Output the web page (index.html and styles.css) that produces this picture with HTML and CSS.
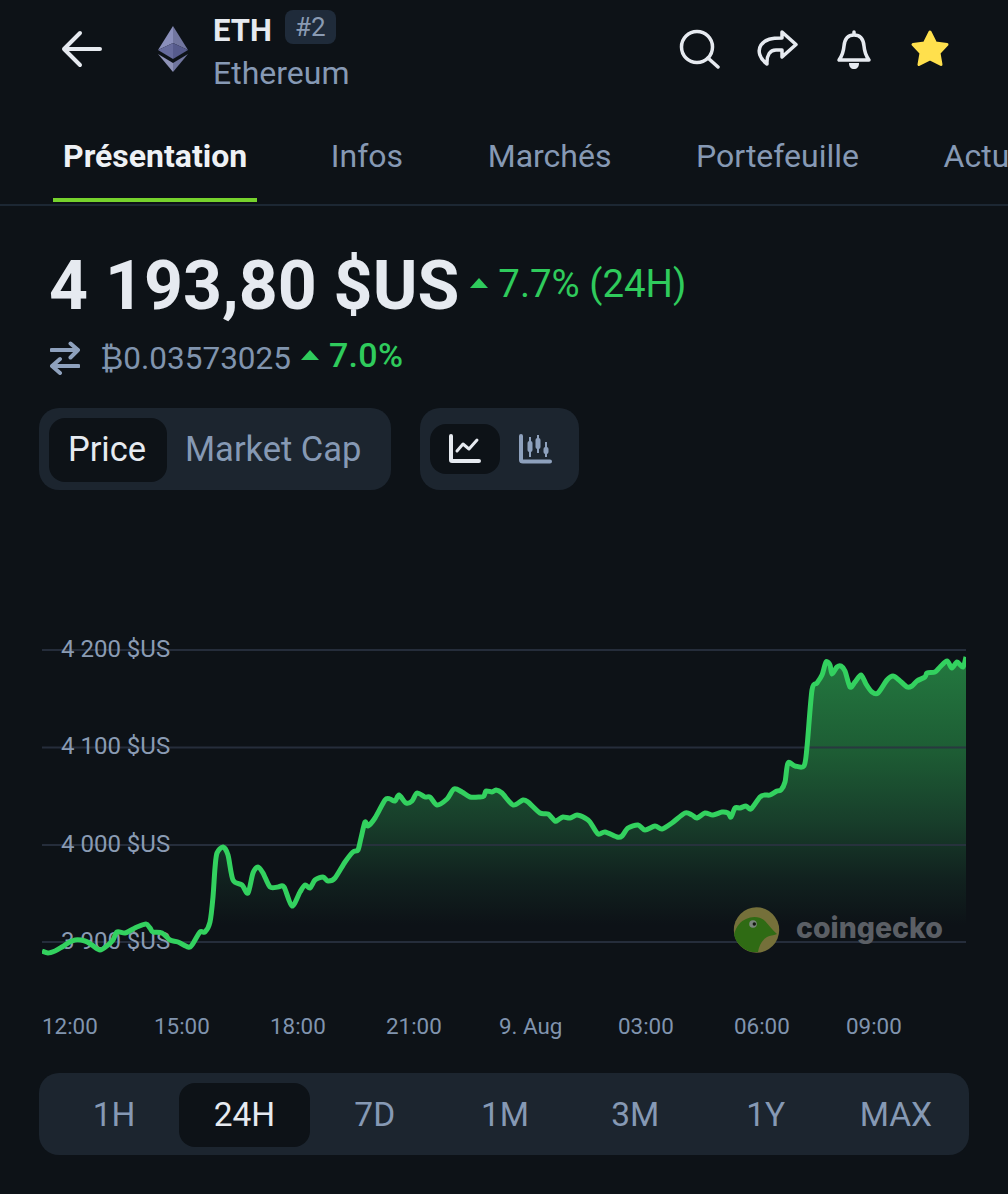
FILE: index.html
```html
<!DOCTYPE html>
<html lang="fr">
<head>
<meta charset="utf-8">
<title>Ethereum</title>
<link rel="stylesheet" href="styles.css">
</head>
<body>
<div class="page">
  <header class="topbar">
    <svg class="back" viewBox="0 0 42 38"><path d="M39 19H3M19 3 3 19l16 16"/></svg>
    <svg class="ethlogo" viewBox="158 26 30 46">
      <polygon points="173,26 158,50 173,43" fill="#8a8fbb"/>
      <polygon points="173,26 188,50 173,43" fill="#71769f"/>
      <polygon points="158,50 173,43 173,59" fill="#666b9c"/>
      <polygon points="188,50 173,43 173,59" fill="#565b8c"/>
      <polygon points="158,54 173,63 173,72" fill="#8f93b8"/>
      <polygon points="188,54 173,63 173,72" fill="#71769f"/>
    </svg>
    <div class="coin">
      <div class="coin-top"><span class="symbol">ETH</span><span class="rank">#2</span></div>
      <div class="coin-name">Ethereum</div>
    </div>
    <div class="actions">
      <svg class="ic ic-search" viewBox="678 28 42 42"><circle cx="697" cy="47" r="15.500"/><path d="M708 58 718 67"/></svg>
      <svg class="ic ic-share" viewBox="0 0 44 44"><path d="M26 5 40 17.500 26 30V23H20C14 23 10.500 28 11 37 4 32 1 24 5 18 9 12 16 11 26 11Z"/></svg>
      <svg class="ic ic-bell" viewBox="834 26 40 44"><path d="M854 34C847 34 844.500 39 844 45 843.500 51 842 55 839 59H869C866 55 864.500 51 864 45 863.500 39 861 34 854 34ZM854 31V34"/><path class="fill" d="M849 62H859C859 66 857 68 854 68 851 68 849 66 849 62Z"/></svg>
      <svg class="ic-star" viewBox="910 30 40 40"><polygon points="930,33 935.500,44 947,45.500 939,54 941,65.500 930,60 919,65.500 921,54 913,45.500 924.500,44"/></svg>
    </div>
  </header>

  <nav class="tabs">
    <a class="tab tab-active">Présentation</a>
    <a class="tab">Infos</a>
    <a class="tab">Marchés</a>
    <a class="tab">Portefeuille</a>
    <a class="tab">Actualités</a>
  </nav>

  <section class="quote">
    <div class="price-row">
      <span class="price">4 193,80 $US</span>
      <span class="tri"></span>
      <span class="change">7.7% (24H)</span>
    </div>
    <div class="btc-row">
      <svg class="swap" viewBox="0 0 30 34"><path d="M1.500 9H28M20.500 2.500 28 9 20.500 16.500M28.500 25H2M10 18 2 25 10 32"/></svg>
      <span class="btc">₿0.03573025</span>
      <span class="tri tri-small"></span>
      <span class="change change-small">7.0%</span>
    </div>
  </section>

  <div class="controls">
    <div class="seg">
      <span class="seg-item seg-active">Price</span>
      <span class="seg-item">Market Cap</span>
    </div>
    <div class="seg seg-icons">
      <span class="icon-item icon-active">
        <svg class="chart-ic" viewBox="0 0 34 30"><path class="ax" d="M3 2V26C3 26.500 3.500 27 4 27H31"/><path d="M9 17 15 10 21 15 29 6"/></svg>
      </span>
      <span class="icon-item">
        <svg class="candle-ic" viewBox="0 0 34 32"><path class="ax" d="M2 3V27C2 28 3 28.500 4 28.500H31"/><path class="wk" d="M11 4V24M19 2V20M27 9V24"/><rect x="8.500" y="8" width="5" height="11" rx="2"/><rect x="16.500" y="5" width="5" height="11" rx="2"/><rect x="24.500" y="14" width="5" height="7" rx="2"/></svg>
      </span>
    </div>
  </div>

  <svg class="chart" viewBox="0 620 1008 430">
    <defs>
      <linearGradient id="areafill" gradientUnits="userSpaceOnUse" x1="0" y1="660" x2="0" y2="925">
        <stop offset="0" stop-color="#23783f"/>
        <stop offset="0.35" stop-color="#1d5c34"/>
        <stop offset="0.6" stop-color="#183f2b"/>
        <stop offset="0.82" stop-color="#11221f"/>
        <stop offset="1" stop-color="#0d1217"/>
      </linearGradient>
      <clipPath id="plot"><rect x="42" y="630" width="924" height="340"/></clipPath>
    </defs>
    <path class="area" id="price-area"/>
    <g class="grid">
      <rect x="42" y="649" width="924" height="2"/>
      <rect x="42" y="746.500" width="924" height="2"/>
      <rect x="42" y="844" width="924" height="2"/>
      <rect x="42" y="941" width="924" height="2"/>
    </g>
    <g class="ylab">
      <text x="61" y="657">4 200 $US</text>
      <text x="61" y="754">4 100 $US</text>
      <text x="61" y="852">4 000 $US</text>
      <text x="61" y="949">3 900 $US</text>
    </g>
    <path class="line" id="price-line"/>
    <g class="gecko">
      <circle cx="756.500" cy="930" r="22.700" fill="#75703a"/>
      <path d="M734 935C736 926 741 921 746 919 752 916 760 916 765 921 769 925 772 930 777 934 773 936 770 935 767 937 762 940 759 946 758 952A22.700 22.700 0 0 1 734 935Z" fill="#2f6b14"/>
      <circle cx="753" cy="924" r="3.800" fill="#7a857c"/>
      <circle cx="754.300" cy="924" r="1.700" fill="#12160f"/>
    </g>
    <text class="gecko-text" x="796" y="938">coingecko</text>
    <g class="xlab">
      <text x="42" y="1034">12:00</text>
      <text x="154" y="1034">15:00</text>
      <text x="270" y="1034">18:00</text>
      <text x="386" y="1034">21:00</text>
      <text x="499" y="1034">9. Aug</text>
      <text x="618" y="1034">03:00</text>
      <text x="734" y="1034">06:00</text>
      <text x="846" y="1034">09:00</text>
    </g>
  </svg>

  <div class="ranges">
    <span class="range">1H</span>
    <span class="range range-active">24H</span>
    <span class="range">7D</span>
    <span class="range">1M</span>
    <span class="range">3M</span>
    <span class="range">1Y</span>
    <span class="range">MAX</span>
  </div>
</div>
<script src="chart.js"></script>
</body>
</html>
```
FILE: styles.css
```css
* { box-sizing: border-box; }
html, body { margin: 0; padding: 0; background: #0d1217; }
body { font-family: Roboto, "Liberation Sans", sans-serif; color: #e6eaf0; }
.page { width: 1008px; height: 1194px; overflow: hidden; background: #0d1217; }

.topbar { display: flex; align-items: center; height: 98px; padding-left: 61px; }
.back { width: 42px; height: 38px; fill: none; stroke: #e6eaf0; stroke-width: 4; stroke-linecap: round; stroke-linejoin: round; }
.ethlogo { width: 30px; height: 46px; margin-left: 55px; }
.coin { margin-left: 25px; display: flex; flex-direction: column; gap: 3px; padding-top: 4px; }
.coin-top { display: flex; align-items: center; gap: 12px; height: 40px; }
.symbol { font-size: 31px; font-weight: 700; color: #e6eaf0; }
.rank { background: #1f2b3a; color: #8a9bb3; font-size: 26px; border-radius: 8px; height: 34px; width: 51px; display: flex; align-items: center; justify-content: center; margin-top: -7px; margin-left: 1px; }
.coin-name { font-size: 32px; line-height: 38px; color: #8699b4; }
.actions { margin-left: auto; display: flex; align-items: center; }
.ic { fill: none; stroke: #e6eaf0; stroke-width: 3.500; stroke-linecap: round; stroke-linejoin: round; display: block; }
.ic .fill { fill: #e6eaf0; stroke: none; }
.ic-search { width: 42px; height: 42px; margin-right: 36px; }
.ic-share { width: 44px; height: 44px; margin-right: 34px; }
.ic-bell { width: 40px; height: 44px; margin-right: 36px; }
.ic-star { width: 40px; height: 40px; margin-right: 58px; fill: #ffe04d; stroke: #ffe04d; stroke-width: 3; stroke-linejoin: round; }

.tabs { display: flex; gap: 63.6px; height: 108px; padding-left: 53px; border-bottom: 2px solid #1c2733; white-space: nowrap; overflow: hidden; }
.tab { display: flex; align-items: center; height: 104px; padding: 16px 11px 0 10px; font-size: 32px; color: #8699b4; border-bottom: 4px solid transparent; margin-bottom: 2px; flex: none; }
.tab-active { font-weight: 700; color: #eef1f5; border-bottom-color: #76d22d; padding-right: 10px; }

.quote { padding: 40px 0 0 49px; }
.price-row { display: flex; align-items: center; height: 80px; }
.price { font-size: 68px; font-weight: 700; color: #e6eaf0; line-height: 80px; white-space: nowrap; }
.tri { width: 0; height: 0; border-left: 9px solid transparent; border-right: 9px solid transparent; border-bottom: 10px solid #2fcb5c; margin: 0 10px 6px 11px; }
.change { font-size: 38.400px; color: #2fcb5c; white-space: nowrap; margin-bottom: 6px; }
.btc-row { display: flex; align-items: center; height: 40px; margin-top: 12px; padding-left: 1px; }
.swap { width: 30px; height: 34px; fill: none; stroke: #8ea1bd; stroke-width: 4; stroke-linecap: round; stroke-linejoin: round; }
.btc { font-size: 31.500px; color: #8094ae; margin-left: 20px; white-space: nowrap; }
.tri-small { margin-left: 10px; margin-right: 10px; }
.change-small { font-size: 34px; font-weight: 500; letter-spacing: 0.3px; }

.controls { display: flex; gap: 29px; padding: 30px 0 0 39px; }
.seg { display: flex; align-items: center; height: 82px; width: 352px; padding: 2px 10px 0; background: #1c252f; border-radius: 20px; }
.seg-item { font-size: 34.500px; color: #8699b4; padding: 0 18px 2px; height: 64px; display: flex; align-items: center; white-space: nowrap; }
.seg-active { color: #e6eaf0; background: #0d1217; border-radius: 16px; width: 118px; justify-content: center; padding: 0 2px 2px 0; flex: none; }
.seg-icons { width: 159px; padding-top: 0; }
.icon-item { width: 70px; height: 50px; display: flex; align-items: center; justify-content: center; border-radius: 16px; }
.icon-active { background: #0d1217; }
.chart-ic { width: 34px; height: 30px; fill: none; stroke: #e6eaf0; stroke-width: 3; stroke-linecap: round; stroke-linejoin: round; }
.chart-ic .ax { stroke-width: 4; }
.candle-ic { width: 34px; height: 32px; margin-left: 4px; fill: #8ea1bd; }
.candle-ic .ax { fill: none; stroke: #8ea1bd; stroke-width: 4; stroke-linecap: round; }
.candle-ic .wk { fill: none; stroke: #8ea1bd; stroke-width: 2; }

.chart { display: block; width: 1008px; height: 430px; margin-top: 130px; }
.area { fill: url(#areafill); }
.grid rect { fill: #2a3242; fill-opacity: 0.85; }
.line { fill: none; stroke: #33d15f; stroke-width: 5; stroke-linejoin: round; stroke-linecap: butt; clip-path: url(#plot); }
.ylab text { font-family: Roboto, sans-serif; font-size: 24px; fill: #8a9bb3; }
.xlab text { font-family: Roboto, sans-serif; font-size: 22.400px; fill: #8094ae; }
.gecko-text { font-family: Inter, Lato, sans-serif; font-size: 28.500px; font-weight: 800; fill: #5b5f65; }

.ranges { display: grid; grid-template-columns: repeat(7, 130.3px); align-items: center; width: 930px; height: 82px; margin: 23px 0 0 39px; padding: 2px 0 0 10px; background: #1c252f; border-radius: 20px; }
.range { font-size: 33.500px; color: #8699b4; height: 64px; padding-bottom: 2px; display: flex; align-items: center; justify-content: center; }
.range-active { color: #e6eaf0; background: #0d1217; border-radius: 16px; }
```
FILE: chart.js
```js
var prices = [42,951,48,953,55,951,62,947,68,943,75,940,85,941,92,945,100,950,108,945,113,940,117,932,125,933,133,929,137,927,146,924,150,928,153,932,162,933,170,940,178,942,188,947,192,945,200,932,205,932,210,922,213,897,215,868,217,853,223,847,228,855,233,880,242,885,248,893,253,873,258,867,263,873,270,887,278,887,284,887,292,906,300,892,305,885,310,888,315,880,323,877,328,881,335,878,345,862,353,852,358,850,361,838,365,822,368,826,375,818,385,800,390,799,395,801,399,795,406,803,412,801,417,793,425,797,430,797,437,805,447,799,454,789,462,792,470,797,480,797,484,796,486,791,492,792,496,790,502,793,513,805,523,800,528,802,540,813,548,814,555,821,558,820,563,817,570,818,577,815,585,818,590,822,598,834,605,832,617,837,622,836,628,828,638,825,645,830,655,826,662,829,672,823,685,813,692,815,697,818,705,813,713,815,722,812,728,813,731,817,735,808,740,808,746,806,751,809,760,797,765,795,770,795,777,791,781,790,785,782,788,763,795,766,804,766,807,747,812,690,817,683,822,675,826,662,830,665,832,674,837,667,841,666,845,671,850,687,855,682,861,675,866,684,872,692,878,693,887,680,893,676,899,680,907,687,912,686,917,681,925,677,927,673,935,672,940,667,947,661,952,668,957,662,963,667,966,657];

function smoothPath(v) {
  var n = v.length / 2, k = 0.14;
  var d = "M" + v[0] + " " + v[1];
  for (var i = 0; i < n - 1; i++) {
    var a = Math.max(i - 1, 0), b = i, c = i + 1, e = Math.min(i + 2, n - 1);
    var c1x = v[2 * b] + (v[2 * c] - v[2 * a]) * k;
    var c1y = v[2 * b + 1] + (v[2 * c + 1] - v[2 * a + 1]) * k;
    var c2x = v[2 * c] - (v[2 * e] - v[2 * b]) * k;
    var c2y = v[2 * c + 1] - (v[2 * e + 1] - v[2 * b + 1]) * k;
    d += "C" + c1x.toFixed(1) + " " + c1y.toFixed(1) + " " + c2x.toFixed(1) + " " + c2y.toFixed(1) + " " + v[2 * c] + " " + v[2 * c + 1];
  }
  return d;
}

var linePath = smoothPath(prices);
document.getElementById("price-line").setAttribute("d", linePath);
document.getElementById("price-area").setAttribute("d", linePath + "V950H42Z");
```
